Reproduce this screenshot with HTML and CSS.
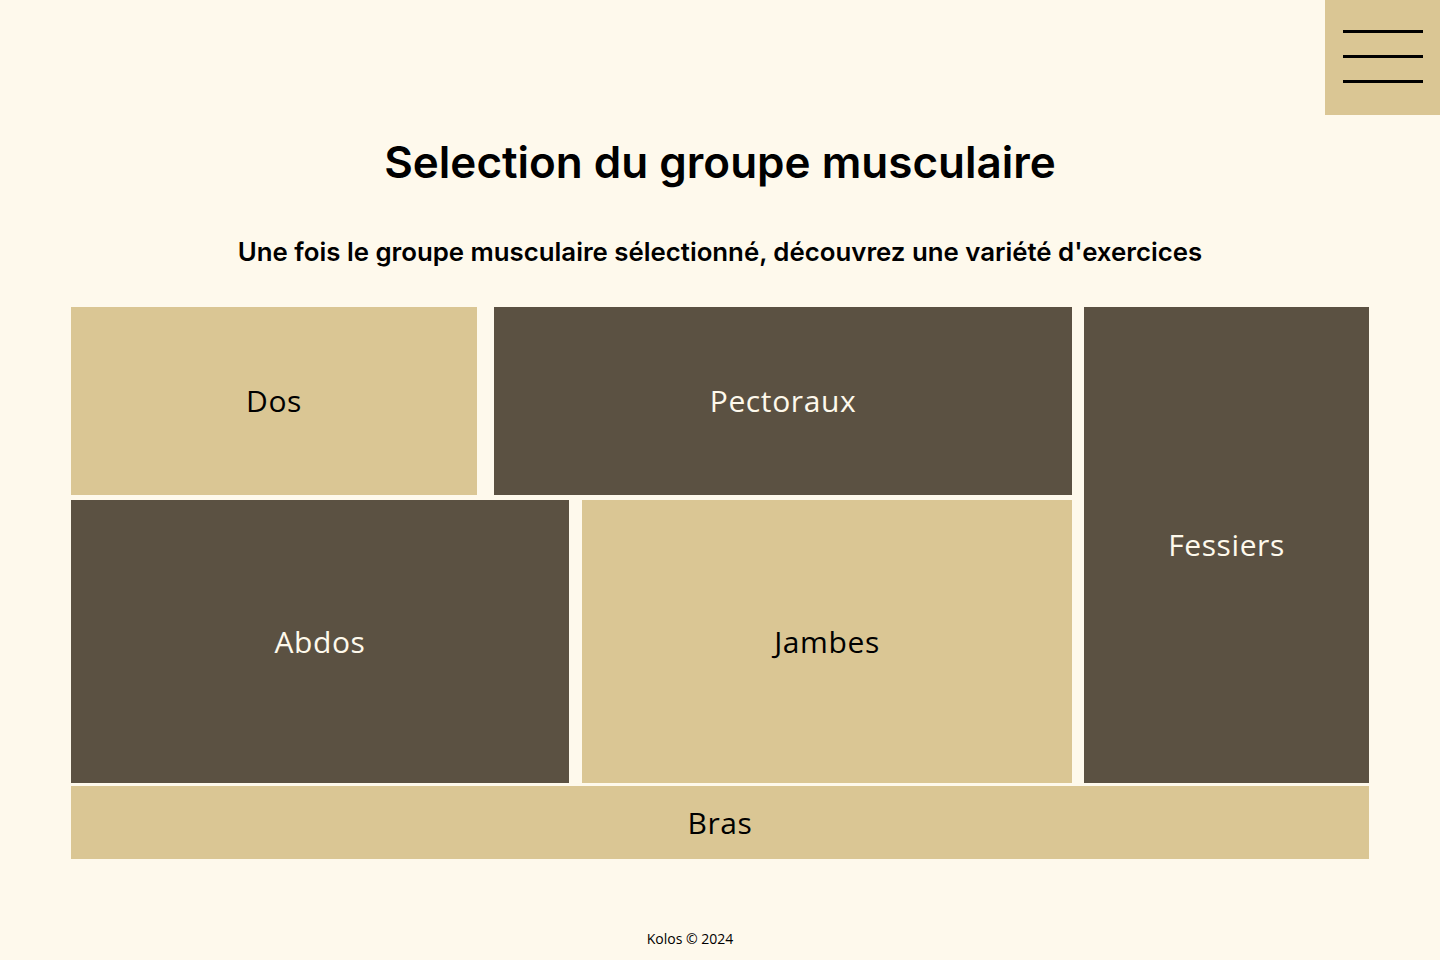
FILE: index.html
```html
<!DOCTYPE html>
<html lang="fr">
<head>
<meta charset="utf-8">
<title>Kolos - Groupes musculaires</title>
<link rel="stylesheet" href="styles.css">
</head>
<body>
<header class="topbar">
  <button class="burger" aria-label="Menu">
    <span></span><span></span><span></span>
  </button>
</header>
<main class="main">
  <h1 class="title">Selection du groupe musculaire</h1>
  <p class="subtitle">Une fois le groupe musculaire sélectionné, découvrez une variété d'exercices</p>
  <section class="board">
    <div class="upper">
      <div class="left">
        <div class="row row1">
          <a class="tile tan dos" href="#">Dos</a>
          <a class="tile dark pecto" href="#">Pectoraux</a>
        </div>
        <div class="row row2">
          <a class="tile dark abdos" href="#">Abdos</a>
          <a class="tile tan jambes" href="#">Jambes</a>
        </div>
      </div>
      <a class="tile dark fessiers" href="#">Fessiers</a>
    </div>
    <a class="tile tan bras" href="#">Bras</a>
  </section>
</main>
<footer class="footer">Kolos © 2024</footer>
</body>
</html>
```

FILE: styles.css
```css
* { box-sizing: border-box; }
html, body { margin: 0; padding: 0; }
body {
  background: #fef9ec;
  width: 1440px;
  height: 960px;
  overflow: hidden;
  font-family: Inter, "Noto Sans", sans-serif;
  color: #000;
}
.topbar {
  display: flex;
  justify-content: flex-end;
  height: 115px;
}
.burger {
  width: 115px;
  height: 115px;
  background: #dac694;
  border: 0;
  padding: 30px 17px 0 18px;
  display: flex;
  flex-direction: column;
  gap: 22px;
  align-items: stretch;
  cursor: pointer;
}
.burger span {
  display: block;
  height: 3px;
  background: #000;
}
.main {
  display: flex;
  flex-direction: column;
  align-items: center;
}
.title {
  margin: 21px 0 0;
  font-size: 44px;
  font-weight: 600;
  line-height: 52px;
  letter-spacing: 0;
}
.subtitle {
  margin: 48px 0 0;
  font-size: 25.8px;
  font-weight: 600;
  line-height: 32px;
  letter-spacing: 0;
}
.board {
  margin-top: 39px;
  width: 1298px;
  display: flex;
  flex-direction: column;
  gap: 3px;
}
.upper {
  display: flex;
  gap: 12px;
}
.left {
  width: 1001px;
  display: flex;
  flex-direction: column;
  gap: 5px;
}
.row { display: flex; }
.row1 { height: 188px; gap: 17px; }
.row2 { height: 283px; gap: 13px; }
.tile {
  display: flex;
  align-items: center;
  justify-content: center;
  text-decoration: none;
  font-family: "Open Sans", "Noto Sans", sans-serif;
  font-size: 30px;
  font-weight: 400;
  letter-spacing: 0.6px;
  padding-bottom: 1px;
}
.tan { background: #dac694; color: #000; }
.dark { background: #5b5142; color: #fef9ec; }
.dos { width: 406px; }
.pecto { flex: 1; }
.abdos { width: 498px; }
.jambes { flex: 1; }
.fessiers { flex: 1; }
.bras { height: 73px; }
.footer {
  position: absolute;
  left: 0;
  right: 0;
  top: 929px;
  text-align: center;
  padding-right: 60px;
  font-family: "Open Sans", "Noto Sans", sans-serif;
  font-size: 14px;
  line-height: 20px;
  color: #000;
}
```
